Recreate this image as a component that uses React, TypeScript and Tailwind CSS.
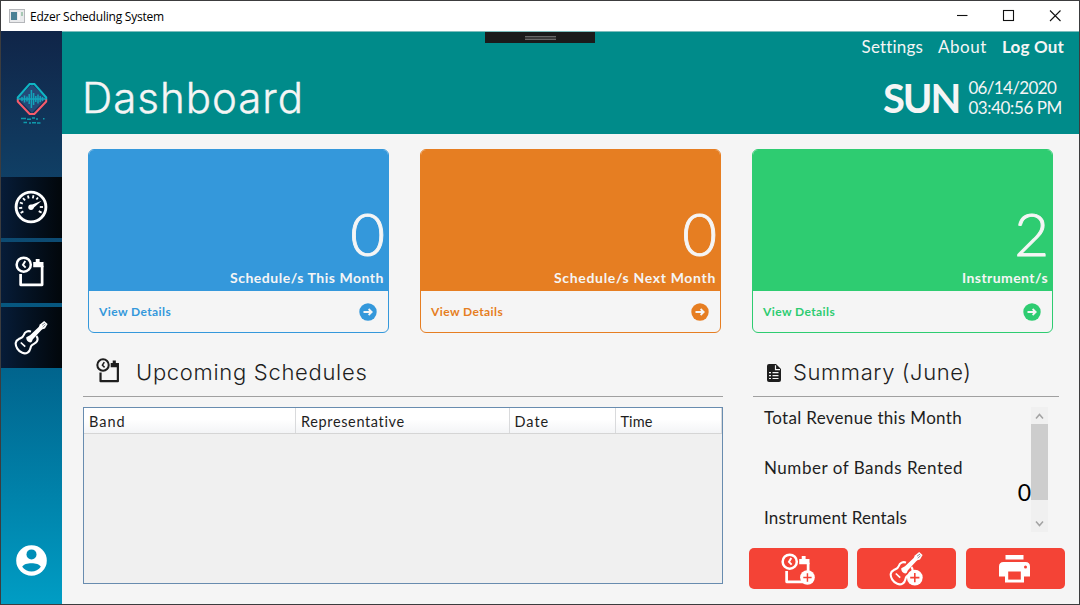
import type { ReactNode } from "react";

function ScheduleIcon({ size, className = "", plus = false }: { size: number; className?: string; plus?: boolean }) {
  return (
    <svg width={size} height={size} viewBox="0 0 32 32" fill="none" stroke="currentColor" className={className}>
      <circle cx="9" cy="9" r="7.3" strokeWidth="2.6" />
      <path d="M10.6 5.2L8.2 9.2L11 12" strokeWidth="2" />
      <path d="M5.8 18.5V29.7H28V10" strokeWidth="2.8" strokeLinejoin="round" />
      <path d="M18.8 11.7V6.3H21.4V3.2H25.4V6.3H29.4V11.7Z" fill="currentColor" stroke="none" />
      {plus && (
        <>
          <circle cx="27.3" cy="25.3" r="7.6" fill="currentColor" stroke="none" />
          <path d="M27.3 21V29.6M23 25.3H31.6" stroke="#f44336" strokeWidth="1.5" />
        </>
      )}
    </svg>
  );
}

function GuitarIcon({ size, className = "", plus = false }: { size: number; className?: string; plus?: boolean }) {
  return (
    <svg width={size} height={size} viewBox="0 0 34 34" fill="none" stroke="currentColor" className={className}>
      <path
        d="M17 10.6C14 9.4 10.8 10.8 9.8 14C9 16.7 7 17 4.6 18.2C1.2 19.8 .8 23.6 3.3 27.6C6 31.8 10.5 33.4 13.6 31.6C16.8 29.8 16 27.2 17.2 25C18.4 22.8 21.7 22.8 23 20.3C24.1 18.1 23.4 16.2 22.3 15"
        strokeWidth="2.1"
      />
      <path d="M12.3 16.2L16 14.2L26 4.8L28.6 7.8L18.9 18.2L17.6 21C15.7 22.4 11.8 20 12.3 16.2Z" fill="currentColor" stroke="none" />
      <path d="M25.8 3.4L30.2 0L33.6 3L31 7.4L27.4 8.6L24.8 6Z" fill="currentColor" stroke="none" />
      <path d="M28 4.2L31 2.1M28.9 6.3L31.5 3.6" stroke="#77808a" strokeWidth=".9" />
      <path d="M6.8 21.5L11.2 25.7" strokeWidth="1.7" />
      {plus && (
        <>
          <circle cx="25.8" cy="25.6" r="7.9" fill="currentColor" stroke="none" />
          <path d="M25.8 21V30.2M21.2 25.6H30.4" stroke="#f44336" strokeWidth="1.6" />
        </>
      )}
    </svg>
  );
}

const TICKS = [-120, -95, -68, -42, -15, 12, 90, 118];

function GaugeIcon() {
  return (
    <svg width="34" height="34" viewBox="0 0 34 34" fill="none" stroke="#fff" className="-mt-px mr-px">
      <circle cx="17" cy="17" r="14.9" strokeWidth="2.9" />
      {TICKS.map((a) => (
        <path key={a} d="M17 5V8.2" strokeWidth="1.8" transform={`rotate(${a} 17 17)`} />
      ))}
      <path d="M24 7.4L22.4 9.6" strokeWidth="1.7" />
      <circle cx="17" cy="17.3" r="2.7" fill="#fff" stroke="none" />
      <path d="M15.8 15.4L27.6 10.8L18.6 18.8Z" fill="#fff" stroke="none" />
    </svg>
  );
}

function Logo() {
  return (
    <svg width="32" height="46" viewBox="0 0 32 46" fill="none">
      <path d="M16 2L30 16.5L16 31L2 16.5Z" fill="#244a78" />
      <path d="M1.8 18V15.5L13.6 2H18.4L30.2 15.5V18" stroke="#0fb5c4" strokeWidth="2" />
      <path d="M1.8 17.5V19.5L13.6 32H18.4L30.2 19.5V17.5" stroke="#f75c6c" strokeWidth="2" />
      <path
        d="M3 17H29M6 15V19M8.5 13.5V20.5M11 14.5V19.5M13.2 12V22M15.4 8V26M17.6 11V23M19.8 14V20M22 12.5V21.5M24.2 14V20M26.4 15V19"
        stroke="#12a4bb"
        strokeWidth="1.5"
      />
      <path d="M5 36.5H10M11 37.2H15M16 36H19M20 37H22M27 36.7H28.5" stroke="#0f9bad" strokeWidth="1.4" />
      <path d="M7.5 40.5H11M13 41H15M16 40.7H20M21 41H24.5" stroke="#0f9bad" strokeWidth="1.4" />
    </svg>
  );
}

function NavButton({ children }: { children: ReactNode }) {
  return (
    <button className="mb-1 flex h-[61px] w-[61px] items-center justify-center bg-linear-to-r from-[#071c38] to-[#02070b] text-white">
      {children}
    </button>
  );
}

type CardProps = { value: string; label: string; track: string; fill: string; border: string; text: string };

function StatCard({ value, label, track, fill, border, text }: CardProps) {
  return (
    <section className={`flex h-[184px] w-[301px] flex-col overflow-hidden rounded-[6px] border ${border}`}>
      <div className={`flex h-[141px] flex-col items-end justify-end pr-[4px] text-[#f5f5f5] ${fill}`}>
        <div className="mb-[2px] text-[60px] leading-[62px] font-light tracking-[-1px] [-webkit-text-stroke:0.9px_#f5f5f5]">{value}</div>
        <div className={`mb-[4px] pt-[3px] text-[14px] leading-[18px] font-bold ${track}`}>{label}</div>
      </div>
      <div className={`flex flex-1 items-center justify-between pr-[11px] pl-[10px] ${text}`}>
        <span className="text-[12px] font-bold tracking-[0.4px]">View Details</span>
        <svg width="18" height="18" viewBox="0 0 18 18">
          <circle cx="9" cy="9" r="8.7" fill="currentColor" />
          <path d="M4.5 9H12.5M9.6 6L12.7 9L9.6 12" stroke="#f5f5f5" strokeWidth="1.8" fill="none" />
        </svg>
      </div>
    </section>
  );
}

const CARDS: CardProps[] = [
  { value: "0", label: "Schedule/s This Month", track: "tracking-[0.53px]", fill: "bg-[#3498db]", border: "border-[#3498db]", text: "text-[#3498db]" },
  { value: "0", label: "Schedule/s Next Month", track: "tracking-[0.67px]", fill: "bg-[#e67e22]", border: "border-[#e67e22]", text: "text-[#e67e22]" },
  { value: "2", label: "Instrument/s", track: "tracking-[0.44px]", fill: "bg-[#2ecc71]", border: "border-[#2ecc71]", text: "text-[#2ecc71]" },
];

const COLUMNS = [
  { name: "Band", cls: "w-[212px] tracking-[1px]" },
  { name: "Representative", cls: "w-[213.5px] tracking-[0.63px]" },
  { name: "Date", cls: "w-[106px] tracking-[1px]" },
  { name: "Time", cls: "w-[106px] tracking-[0.1px]" },
];

function ActionButton({ children }: { children: ReactNode }) {
  return <button className="flex h-[41px] w-[99px] items-center justify-center rounded-[5px] bg-[#f44336] text-white">{children}</button>;
}

export default function App() {
  return (
    <div className="flex h-[605px] w-[1080px] flex-col overflow-hidden border border-[#3c3c3e] bg-[#f5f5f5] font-['Lato',sans-serif] text-[#1e1e1e]">
      <header className="flex h-[30px] shrink-0 items-center bg-white pl-2 text-black">
        <svg width="16" height="14" viewBox="0 0 16 14">
          <rect x=".5" y=".5" width="15" height="13" fill="#e9eaec" stroke="#b4b6ba" />
          <rect x="2" y="3" width="6" height="8" fill="#4a8195" />
          <rect x="9" y="3" width="2" height="8" fill="#f8f8f8" />
          <rect x="12" y="3" width="2" height="4" fill="#a7c8b4" />
        </svg>
        <span className="mt-px ml-[5px] font-['Open_Sans',sans-serif] text-[12px] tracking-[-0.22px]">Edzer Scheduling System</span>
        <svg className="ml-auto" width="122" height="30" viewBox="0 0 122 30" fill="none" stroke="#111" strokeWidth="1.1">
          <path d="M0 14.5H10.5" />
          <rect x="46.5" y="9.5" width="10" height="10" />
          <path d="M93 9.5L103.5 20M103.5 9.5L93 20" />
        </svg>
      </header>

      <div className="flex min-h-0 flex-1">
        <aside className="flex w-[61px] shrink-0 flex-col items-center bg-linear-to-b from-[#102548] via-[#015f88] via-55% to-[#009dc4]">
          <div className="flex h-[146px] items-center pt-[1px]">
            <Logo />
          </div>
          <NavButton>
            <GaugeIcon />
          </NavButton>
          <NavButton>
            <ScheduleIcon size={31} className="-mt-[3px] mr-[2px]" />
          </NavButton>
          <NavButton>
            <GuitarIcon size={34} className="mr-px" />
          </NavButton>
          <svg className="mt-auto mb-[28px]" width="31" height="31" viewBox="0 0 31 31">
            <circle cx="15.5" cy="15.5" r="15.3" fill="#fff" />
            <circle cx="15.5" cy="9.4" r="5" fill="#008eb7" />
            <path d="M6.2 21.8C8.6 17.2 22.4 17.2 24.8 21.8C20.8 28.2 10.2 28.2 6.2 21.8Z" fill="#0091ba" />
          </svg>
        </aside>

        <main className="flex min-w-0 flex-1 flex-col">
          <div className="relative h-[103px] shrink-0 border-t border-[#7cbdbd] bg-[#008b8a] text-[#f5f5f5]">
            <div className="absolute top-0 left-[423px] flex h-[11px] w-[110px] items-center justify-center bg-[#1b1b1b]">
              <div className="h-[4px] w-[31px] border-y border-[#686868] bg-[#3a3a3a]" />
            </div>
            <nav className="flex justify-end gap-[15px] pt-[4px] pr-[15px] text-[17px] leading-[22px]">
              <span className="tracking-[0.17px]">Settings</span>
              <span className="tracking-[0.56px]">About</span>
              <span className="font-bold tracking-[0.18px]">Log Out</span>
            </nav>
            <div className="flex items-center justify-between pr-[17px] pl-[20px]">
              <h1 className="mt-[14px] font-['Inter',sans-serif] text-[42px] leading-[52px] font-light tracking-[1px] [-webkit-text-stroke:0.4px_#f5f5f5]">Dashboard</h1>
              <div className="mt-[13px] flex items-center">
                <span className="mr-[9px] text-[40px] leading-[44px] font-bold tracking-[-2px]">SUN</span>
                <div className="text-[17px] leading-[19.5px]">
                  <div className="tracking-[-0.65px]">06/14/2020</div>
                  <div className="tracking-[-0.4px]">03:40:56 PM</div>
                </div>
              </div>
            </div>
          </div>

          <div className="mt-[15px] ml-[26px] flex gap-[31px]">
            {CARDS.map((c) => (
              <StatCard key={c.label} {...c} />
            ))}
          </div>

          <div className="flex min-h-0 flex-1 pl-[21px]">
            <section className="w-[640px]">
              <div className="flex h-[64px] items-center border-b border-[#a0a0a0] pt-[16px] pl-[13px]">
                <ScheduleIcon size={25} className="mt-[-4px]" />
                <h2 className="ml-[15px] font-['Inter',sans-serif] text-[22px] font-light tracking-[0.7px]">Upcoming Schedules</h2>
              </div>
              <div className="mt-[10px] h-[177px] w-[640px] border border-[#688caf] bg-[#f0f0f0]">
                <div className="flex h-[26px] border-b border-[#d5d5d5] bg-linear-to-b from-white from-45% to-[#f3f4f6] text-[14.5px] leading-[28px]">
                  {COLUMNS.map((c) => (
                    <div key={c.name} className={`border-r border-[#d9dadc] pl-[5px] ${c.cls}`}>
                      {c.name}
                    </div>
                  ))}
                </div>
              </div>
            </section>

            <section className="ml-[26px] w-[320px]">
              <div className="ml-[4px] flex h-[64px] w-[306px] items-center border-b border-[#a0a0a0] pt-[16px] pl-[14px]">
                <svg width="14" height="18" viewBox="0 0 14 18">
                  <path d="M2 0H9L14 5V16Q14 18 12 18H2Q0 18 0 16V2Q0 0 2 0Z" fill="#1e1e1e" />
                  <path d="M8.5 1.2V5.6H13M2 8.7H4M5.5 8.7H11.5M2 11.6H4M5.5 11.6H11.5M2 14.5H4M5.5 14.5H11.5" stroke="#f5f5f5" strokeWidth="1.2" fill="none" />
                </svg>
                <h2 className="ml-[12px] font-['Inter',sans-serif] text-[22px] font-light tracking-[0.6px]">Summary (June)</h2>
              </div>
              <div className="mt-[10px] ml-[15px] flex h-[125px]">
                <div className="flex w-[267px] flex-col text-[17px] leading-[22px]">
                  <div className="h-[50px] tracking-[0.31px]">Total Revenue this Month</div>
                  <div className="h-[25px] tracking-[0.53px]">Number of Bands Rented</div>
                  <div className="h-[25px] text-right text-[23px] leading-[20px] text-black">0</div>
                  <div className="tracking-[0.15px]">Instrument Rentals</div>
                </div>
                <div className="flex w-[17px] flex-col items-center justify-between bg-[#f0f0f0]">
                  <svg width="17" height="17" viewBox="0 0 17 17" fill="none" stroke="#a3a3a3" strokeWidth="1.5">
                    <path d="M5 11.5L8.5 7.5L12 11.5" />
                  </svg>
                  <div className="mb-auto h-[76px] w-[17px] bg-[#cdcdcd]" />
                  <svg width="17" height="17" viewBox="0 0 17 17" fill="none" stroke="#a3a3a3" strokeWidth="1.5">
                    <path d="M5 6.5L8.5 10.5L12 6.5" />
                  </svg>
                </div>
              </div>
              <div className="mt-[16px] -ml-[0.5px] flex gap-[9.5px]">
                <ActionButton>
                  <ScheduleIcon size={31} plus className="mr-[4px] overflow-visible" />
                </ActionButton>
                <ActionButton>
                  <GuitarIcon size={34} plus className="mr-[2px]" />
                </ActionButton>
                <ActionButton>
                  <svg width="31" height="28" viewBox="0 0 31 28" className="mr-px">
                    <path d="M6.5 0H24.5V4.5H6.5Z" fill="#fff" />
                    <path d="M4.5 7H26.5Q31 7 31 11.5V21.5H25V27.5H6V21.5H0V11.5Q0 7 4.5 7Z" fill="#fff" />
                    <path d="M9.2 16.5H21.8V24.6H9.2Z" fill="#f44336" />
                    <circle cx="26.5" cy="12" r="1.5" fill="#f44336" />
                  </svg>
                </ActionButton>
              </div>
            </section>
          </div>
        </main>
      </div>
    </div>
  );
}
